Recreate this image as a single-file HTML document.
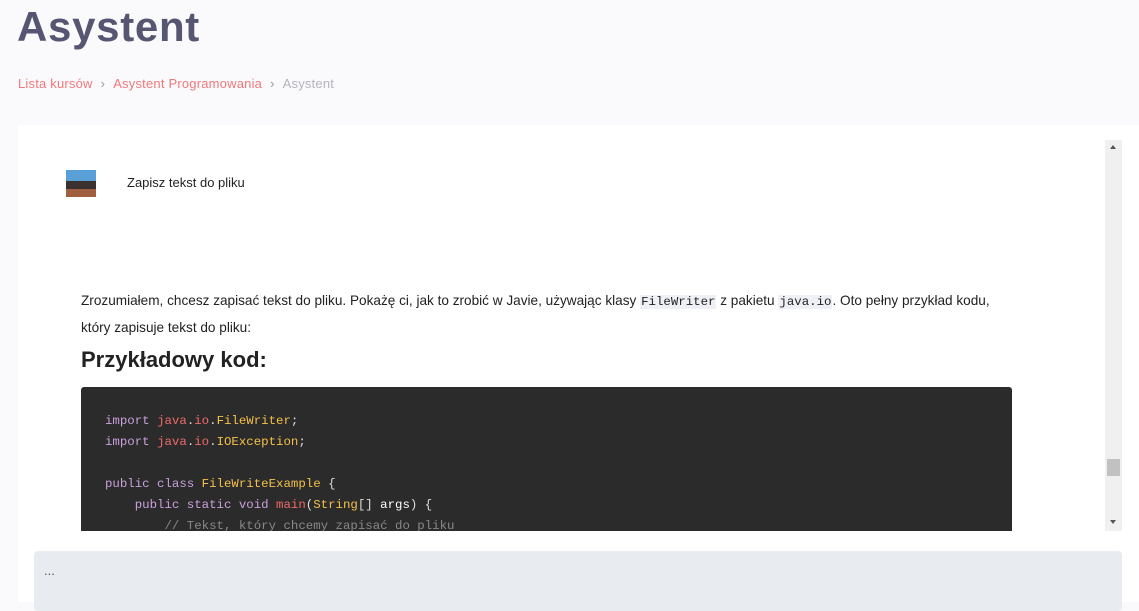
<!DOCTYPE html>
<html><head><meta charset="utf-8"><style>
*{margin:0;padding:0;box-sizing:border-box}
body{width:1139px;height:602px;overflow:hidden;background:#fafafd;font-family:"Liberation Sans",sans-serif;position:relative}
h1{position:absolute;left:17px;top:3px;font-size:42px;font-weight:bold;color:#575672;letter-spacing:0.7px}
.bc{position:absolute;left:18px;top:76px;font-size:13px;color:#f0787a;letter-spacing:0.2px}
.bc .sep{color:#999;margin:0 8px}
.bc .cur{color:#b4b4bc}
.panel{position:absolute;left:18px;top:125px;width:1121px;height:477px;background:#fff}
.av{position:absolute;left:66px;top:170px;width:30px;height:27px;background:linear-gradient(#5aa0d8 0 40%,#3a3030 40% 70%,#a06040 70%)}
.q{position:absolute;left:127px;top:175px;font-size:13px;color:#222}
.p{position:absolute;left:81px;top:288px;width:960px;font-size:13.6px;line-height:25px;color:#222;letter-spacing:0}
code{font-family:"Liberation Mono",monospace;background:#eef0f5;font-size:12.4px;padding:0 1px;letter-spacing:0}
h3{position:absolute;left:81px;top:347px;font-size:22px;font-weight:bold;color:#222}
.code{position:absolute;left:81px;top:387px;width:931px;height:144px;background:#2b2b2b;border-radius:3px 3px 0 0;overflow:hidden;padding:24px 0 0 24px;font-family:"Liberation Mono","DejaVu Sans Mono",monospace;font-size:12.4px;line-height:21px;color:#ddd;white-space:pre}
.k{color:#c9a0dc}.r{color:#f06a6a}.y{color:#f4c04a}.w{color:#fff}.c{color:#888}
.sb{position:absolute;left:1105px;top:140px;width:17px;height:391px;background:#f0f0f0}
.th{position:absolute;left:2px;top:319px;width:13px;height:17px;background:#c1c1c1}
.bot{position:absolute;left:34px;top:551px;width:1088px;height:60px;background:#e8ebef;border-radius:4px;padding:12px 10px;color:#555;font-size:13px}
</style></head><body>
<h1>Asystent</h1>
<div class="bc">Lista kursów<span class="sep">›</span>Asystent Programowania<span class="sep">›</span><span class="cur">Asystent</span></div>
<div class="panel"></div>
<div class="av"></div>
<div class="q">Zapisz tekst do pliku</div>
<div class="p">Zrozumiałem, chcesz zapisać tekst do pliku. Pokażę ci, jak to zrobić w Javie, używając klasy <code>FileWriter</code> z pakietu <code>java.io</code>. Oto pełny przykład kodu,<br>który zapisuje tekst do pliku:</div>
<h3>Przykładowy kod:</h3>
<div class="code"><span class="k">import</span> <span class="r">java</span>.<span class="r">io</span>.<span class="y">FileWriter</span>;
<span class="k">import</span> <span class="r">java</span>.<span class="r">io</span>.<span class="y">IOException</span>;

<span class="k">public class</span> <span class="y">FileWriteExample</span> {
    <span class="k">public static void</span> <span class="r">main</span>(<span class="y">String</span>[] <span class="w">args</span>) {
        <span class="c">// Tekst, który chcemy zapisać do pliku</span></div>
<div class="sb"><div style="position:absolute;left:5px;top:5px;border:3.5px solid transparent;border-bottom:4px solid #555;border-top:0"></div><div class="th"></div><div style="position:absolute;left:5px;top:380px;border:3.5px solid transparent;border-top:4px solid #555;border-bottom:0"></div></div>
<div class="bot">...</div>
</body></html>
